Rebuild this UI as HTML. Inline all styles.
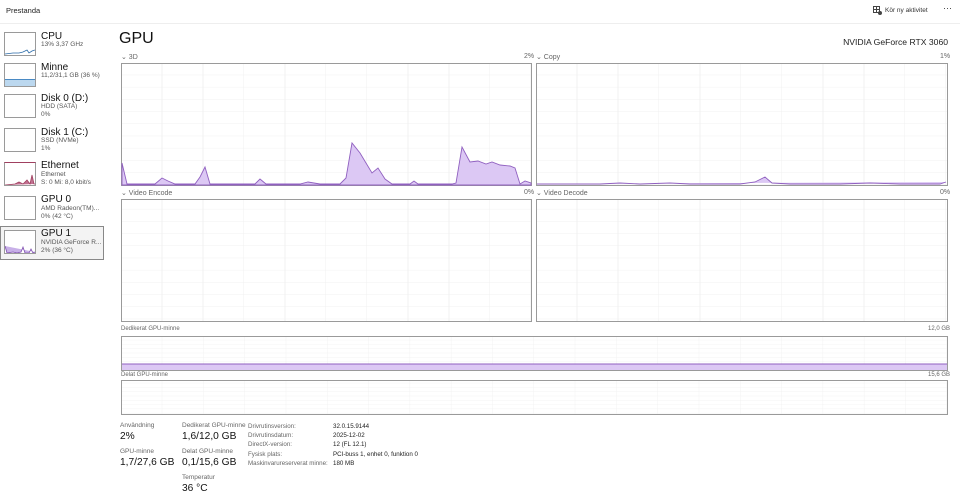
<!DOCTYPE html>
<html><head><meta charset="utf-8"><style>
*{margin:0;padding:0;box-sizing:border-box}
body{width:960px;height:504px;background:#fff;font-family:"Liberation Sans",sans-serif;color:#1a1a1a;position:relative;overflow:hidden}
.a{position:absolute;white-space:nowrap}
.s{font-size:7px;color:#666}
.side .t{font-size:10px;color:#111}
.side .u{font-size:6.5px;color:#555;line-height:8px}
.thumb{position:absolute;left:4px;width:32px;height:24px;border:1px solid #9a9a9a;background:#fff}
.lbl{font-size:6.5px;color:#666}
.v{font-size:10.2px;color:#111}
</style></head><body>
<div class="a" style="left:6px;top:6px;font-size:7.5px;color:#222">Prestanda</div>
<div class="a" style="left:0;top:23px;width:960px;height:1px;background:#eee"></div>
<svg class="a" style="left:873px;top:6px" width="9" height="9"><rect x="0.5" y="0.5" width="6" height="6" fill="none" stroke="#444"/><line x1="0.5" y1="3.5" x2="6.5" y2="3.5" stroke="#444"/><line x1="3.5" y1="0.5" x2="3.5" y2="6.5" stroke="#444"/><circle cx="7" cy="7" r="2" fill="#444"/></svg>
<div class="a" style="left:885px;top:7px;font-size:6.5px;color:#333">Kör ny aktivitet</div>
<div class="a" style="left:943px;top:3px;font-size:9px;color:#333">···</div>

<div class="side">
<div class="a" style="left:0;top:226px;width:104px;height:34px;background:#f3f3f3;border:1px solid #888"></div>
<div class="thumb" style="top:32px"><svg width="30" height="22" style="position:absolute;left:0;top:0"><polyline points="0,21 8,20 14,20 18,19 22,17 24,20 27,18 30,17" fill="none" stroke="#2a6aa8" stroke-width="0.8"/></svg></div>
<div class="a t" style="left:41px;top:31px">CPU</div><div class="a u" style="left:41px;top:41px">13% 3,37 GHz</div>
<div class="thumb" style="top:63px"><div style="position:absolute;left:0;bottom:0;width:30px;height:7px;background:#bcd8ef;border-top:1px solid #4a8ac4"></div></div>
<div class="a t" style="left:41px;top:62px">Minne</div><div class="a u" style="left:41px;top:72px">11,2/31,1 GB (36 %)</div>
<div class="thumb" style="top:94px"></div>
<div class="a t" style="left:41px;top:93px">Disk 0 (D:)</div><div class="a u" style="left:41px;top:103px">HDD (SATA)<br>0%</div>
<div class="thumb" style="top:128px"></div>
<div class="a t" style="left:41px;top:127px">Disk 1 (C:)</div><div class="a u" style="left:41px;top:137px">SSD (NVMe)<br>1%</div>
<div class="thumb" style="top:162px;border-top:1px solid #a04060"><svg width="30" height="22" style="position:absolute;left:0;top:0"><polyline points="0,22 10,21 14,19 18,21 22,17 25,21 27,12 29,21 30,21" fill="#c07090" stroke="#a04060" stroke-width="0.8"/></svg></div>
<div class="a t" style="left:41px;top:160px">Ethernet</div><div class="a u" style="left:41px;top:171px">Ethernet<br>S: 0 Mi: 8,0 kbit/s</div>
<div class="thumb" style="top:196px"></div>
<div class="a t" style="left:41px;top:194px">GPU 0</div><div class="a u" style="left:41px;top:205px">AMD Radeon(TM)...<br>0% (42 °C)</div>
<div class="thumb" style="top:230px"><svg width="30" height="22" style="position:absolute;left:0;top:0"><polyline points="0,15 2,22 8,21 12,22 16,21 18,16 20,22 24,22 26,18 28,22 30,21" fill="#c8b0e8" stroke="#8050b0" stroke-width="0.8"/></svg></div>
<div class="a t" style="left:41px;top:228px">GPU 1</div><div class="a u" style="left:41px;top:239px">NVIDIA GeForce R...<br>2% (36 °C)</div>
</div>

<div class="a" style="left:119px;top:30px;font-size:16px;color:#111">GPU</div>
<div class="a" style="right:12px;top:37px;font-size:8.6px;color:#222">NVIDIA GeForce RTX 3060</div>

<div class="a s" style="left:121px;top:53px">⌄ 3D</div><div class="a s" style="left:524px;top:53px">2%</div>
<div class="a s" style="left:536px;top:53px">⌄ Copy</div><div class="a s" style="left:940px;top:53px">1%</div>
<div class="a s" style="left:121px;top:189px">⌄ Video Encode</div><div class="a s" style="left:524px;top:189px">0%</div>
<div class="a s" style="left:536px;top:189px">⌄ Video Decode</div><div class="a s" style="left:940px;top:189px">0%</div>
<div class="a s" style="left:121px;top:326px;font-size:6px">Dedikerat GPU-minne</div><div class="a s" style="left:928px;top:326px;font-size:6px">12,0 GB</div>
<div class="a s" style="left:121px;top:372px;font-size:6px">Delat GPU-minne</div><div class="a s" style="left:928px;top:372px;font-size:6px">15,6 GB</div>

<svg class="a" style="left:0;top:0" width="960" height="504">
<defs>
<pattern id="g" width="41" height="12.2" patternUnits="userSpaceOnUse" x="121" y="63"><path d="M41 0V12.2M0 12.2H41" fill="none" stroke="#eeeeee" stroke-width="0.8"/></pattern>
<pattern id="g2" width="41" height="12.2" patternUnits="userSpaceOnUse" x="536" y="63"><path d="M41 0V12.2M0 12.2H41" fill="none" stroke="#eeeeee" stroke-width="0.8"/></pattern>
<pattern id="g3" width="41.3" height="4.3" patternUnits="userSpaceOnUse" x="121" y="336"><path d="M41.3 0V4.3M0 4.3H41.3" fill="none" stroke="#f0f0f0" stroke-width="0.8"/></pattern>
</defs>
<rect x="121.5" y="63.5" width="410" height="122" fill="url(#g)" stroke="#9a9a9a"/>
<rect x="536.5" y="63.5" width="411" height="122" fill="url(#g2)" stroke="#9a9a9a"/>
<rect x="121.5" y="199.5" width="410" height="122" fill="url(#g)" stroke="#9a9a9a"/>
<rect x="536.5" y="199.5" width="411" height="122" fill="url(#g2)" stroke="#9a9a9a"/>
<rect x="121.5" y="336.5" width="826" height="34" fill="url(#g3)" stroke="#9a9a9a"/>
<rect x="122" y="364" width="825" height="6" fill="#dcc8f4"/>
<line x1="122" y1="364" x2="947" y2="364" stroke="#9060c0" stroke-width="1"/>
<rect x="121.5" y="380.5" width="826" height="34" fill="url(#g3)" stroke="#9a9a9a"/>
<polygon points="122,163 127,184 155,184 162,178 168,181 175,184 195,184 200,177 205,167 210,184 255,184 260,179 266,184 300,184 308,182 320,184 340,184 346,178 352,143 360,153 372,173 378,168 385,179 392,184 410,184 414,181 418,184 452,184 456,183 462,147 470,162 478,161 486,164 492,162 500,165 510,166 515,168 520,184 525,181 531,183 531,185 122,185" fill="#dcc8f4" stroke="#9060c0" stroke-width="0.9"/>
<polyline points="537,184 600,184 620,183 640,184 670,183 690,184 740,184 755,182 765,177 772,183 790,184 840,184 870,183 900,184 940,184 946,182" fill="#dcc8f4" stroke="#9060c0" stroke-width="0.9"/>
</svg>

<div class="a lbl" style="left:120px;top:422px">Användning</div><div class="a v" style="left:120px;top:431px">2%</div>
<div class="a lbl" style="left:120px;top:448px">GPU-minne</div><div class="a v" style="left:120px;top:457px">1,7/27,6 GB</div>
<div class="a lbl" style="left:182px;top:422px">Dedikerat GPU-minne</div><div class="a v" style="left:182px;top:431px">1,6/12,0 GB</div>
<div class="a lbl" style="left:182px;top:448px">Delat GPU-minne</div><div class="a v" style="left:182px;top:457px">0,1/15,6 GB</div>
<div class="a lbl" style="left:182px;top:474px">Temperatur</div><div class="a v" style="left:182px;top:483px">36 °C</div>
<div class="a lbl" style="left:248px;top:422px;line-height:9.2px;font-size:6.2px">Drivrutinsversion:<br>Drivrutinsdatum:<br>DirectX-version:<br>Fysisk plats:<br>Maskinvarureserverat minne:</div>
<div class="a lbl" style="left:333px;top:422px;line-height:9.2px;color:#222;font-size:6.2px">32.0.15.9144<br>2025-12-02<br>12 (FL 12.1)<br>PCI-buss 1, enhet 0, funktion 0<br>180 MB</div>
</body></html>
